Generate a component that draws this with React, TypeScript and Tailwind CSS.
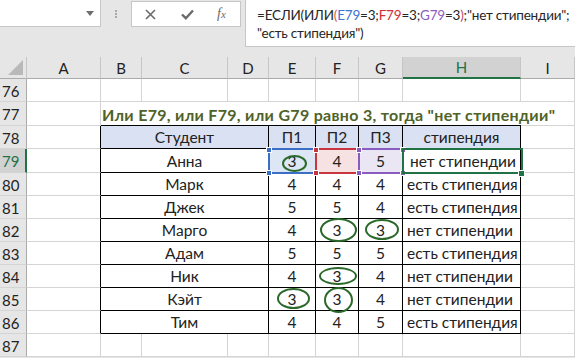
import React from "react";

type Row = { n: number; name: string; p: [number, number, number]; s: string };

const data: Row[] = [
  { n: 79, name: "Анна", p: [3, 4, 5], s: "нет стипендии" },
  { n: 80, name: "Марк", p: [4, 4, 4], s: "есть стипендия" },
  { n: 81, name: "Джек", p: [5, 5, 4], s: "есть стипендия" },
  { n: 82, name: "Марго", p: [4, 3, 3], s: "нет стипендии" },
  { n: 83, name: "Адам", p: [5, 5, 5], s: "есть стипендия" },
  { n: 84, name: "Ник", p: [4, 3, 4], s: "нет стипендии" },
  { n: 85, name: "Кэйт", p: [3, 3, 4], s: "нет стипендии" },
  { n: 86, name: "Тим", p: [4, 4, 5], s: "есть стипендия" },
];

const FONT = "font-['Lato','Liberation_Sans',sans-serif]";

function RowHead({ n, sel }: { n: number; sel?: boolean }) {
  return (
    <div
      className={
        sel
          ? "flex items-center pl-[2px] pt-[2px] text-[15px] bg-[#d2d2d2] text-[#217346] border-r-2 border-r-[#217346] border-b border-b-[#d4d4d4]"
          : "flex items-center pl-[2px] pt-[2px] text-[15px] bg-[#e6e6e6] text-[#222] border-r border-r-[#ababab] border-b border-b-[#d4d4d4]"
      }
    >
      {n}
    </div>
  );
}

function Gray() {
  return <div className="bg-white border-r border-b border-r-[#d4d4d4] border-b-[#d4d4d4]" />;
}

function Ellipse({ l, t, w, h }: { l: number; t: number; w: number; h: number }) {
  return (
    <div
      className="absolute rounded-[50%] border-2 border-[#2b6a2b] pointer-events-none"
      style={{ left: l, top: t, width: w, height: h }}
    />
  );
}

function RefBox({ l, w, color }: { l: number; w: number; color: string }) {
  const t = 148;
  const h = 26;
  const sq = [
    [l - 2, t - 1],
    [l + w - 4, t - 1],
    [l - 2, t + h - 4],
    [l + w - 4, t + h - 4],
  ];
  return (
    <>
      <div
        className="absolute border-2 pointer-events-none"
        style={{ left: l, top: t, width: w, height: h, borderColor: color }}
      />
      {sq.map(([x, y], i) => (
        <div
          key={i}
          className="absolute w-[6px] h-[6px] border border-white"
          style={{ left: x, top: y, background: color }}
        />
      ))}
    </>
  );
}

const CELL = "flex items-center justify-center pt-[2px] text-[15.5px]";

export default function App() {
  const colLetters = ["A", "B", "C", "D", "E", "F", "G", "H", "I"];
  return (
    <div className={`relative w-[575px] h-[358px] overflow-hidden bg-[#e6e6e6] text-[#222] ${FONT}`}>
      {/* formula bar */}
      <div className="flex h-[57px] items-start">
        <div className="relative shrink-0 w-[101px] h-[27px] bg-white border-r border-b border-[#c6c6c6]">
          <svg className="absolute left-[86px] top-[11px]" width="8" height="5" viewBox="0 0 8 5">
            <path d="M0 0 L8 0 L4 5 Z" fill="#6e6e6e" />
          </svg>
        </div>
        <div className="shrink-0 w-[30px] h-[27px] flex flex-col items-center justify-center gap-[1px]">
          <div className="w-[2px] h-[2px] bg-[#a8a8a8]" />
          <div className="w-[2px] h-[2px] bg-[#a8a8a8]" />
          <div className="w-[2px] h-[2px] bg-[#a8a8a8]" />
        </div>
        <div className="shrink-0 mt-[1px] w-[110px] h-[26px] bg-white border border-[#c6c6c6] flex items-center">
          <svg className="ml-[13px]" width="11" height="11" viewBox="0 0 11 11">
            <path d="M1 1 L10 10 M10 1 L1 10" stroke="#6a6a6a" strokeWidth="1.6" />
          </svg>
          <svg className="ml-[25px]" width="13" height="11" viewBox="0 0 13 11">
            <path d="M1 5.5 L4.8 9.2 L12 1.5" stroke="#6a6a6a" strokeWidth="2.4" fill="none" />
          </svg>
          <span className="ml-[23px] font-['Liberation_Serif',serif] italic text-[14px] text-[#6a6a6a] leading-none">
            f<span className="text-[11px]">x</span>
          </span>
        </div>
        <div className="ml-[4px] min-w-0 flex-1 h-[47px] bg-white border-l border-b border-[#c6c6c6] pl-[11px] pt-[6px] text-[13.5px] tracking-[-0.2px] leading-[18px] text-[#262626] whitespace-nowrap overflow-hidden">
          <div>
            =ЕСЛИ(ИЛИ<span className="text-[#d0603a]">(</span>
            <span className="text-[#3c74cf]">E79</span>=3;
            <span className="text-[#d02c3a]">F79</span>=3;
            <span className="text-[#8a5cc0]">G79</span>=3
            <span className="text-[#c04a6a]">)</span>;"нет стипендии";
          </div>
          <div>"есть стипендия")</div>
        </div>
      </div>

      {/* sheet */}
      <div className="grid grid-cols-[27px_74px_41px_86px_41px_47px_43px_44px_118px_54px] grid-rows-[22px_23px_24px_23px_24px_23px_23px_23px_23px_23px_23px_23px_23px]">
        {/* header row */}
        <div className="relative bg-[#e6e6e6] border-r border-b border-r-[#c6c6c6] border-b-[#ababab]">
          <svg className="absolute right-[3px] bottom-[3px]" width="15" height="15" viewBox="0 0 15 15">
            <path d="M15 0 L15 15 L0 15 Z" fill="#b9b9b9" />
          </svg>
        </div>
        {colLetters.map((c) =>
          c === "H" ? (
            <div
              key={c}
              className="flex items-center justify-center pt-[1px] text-[15px] bg-[#d2d2d2] text-[#217346] border-r border-r-[#c6c6c6] border-b-2 border-b-[#217346]"
            >
              {c}
            </div>
          ) : (
            <div
              key={c}
              className="flex items-center justify-center pt-[1px] text-[15px] bg-[#e6e6e6] text-[#222] border-r border-r-[#c6c6c6] border-b border-b-[#ababab]"
            >
              {c}
            </div>
          )
        )}

        {/* row 76 */}
        <RowHead n={76} />
        {colLetters.map((c) => (
          <Gray key={c} />
        ))}

        {/* row 77 */}
        <RowHead n={77} />
        <div className="bg-white border-r border-b border-r-[#d4d4d4] border-b-[#d4d4d4]" />
        <div className="relative z-10 bg-white border-b border-b-black flex items-center pt-[2px] pl-[1px] whitespace-nowrap font-bold text-[16px] tracking-[0.3px] text-[#4f6228]">
          Или E79, или F79, или G79 равно 3, тогда "нет стипендии"
        </div>
        <div className="bg-white border-b border-b-black" />
        <div className="bg-white border-b border-b-black" />
        <div className="bg-white border-b border-b-black" />
        <div className="bg-white border-b border-b-black" />
        <div className="bg-white border-b border-b-black" />
        <div className="bg-white border-b border-b-black" />
        <div className="bg-white border-r border-b border-r-[#d4d4d4] border-b-[#d4d4d4]" />

        {/* row 78 header */}
        <RowHead n={78} />
        <div className="bg-white border-r border-b border-r-black border-b-[#d4d4d4]" />
        <div className={`col-span-3 ${CELL} bg-[#d9e1f2] border-r border-b border-black`}>Студент</div>
        <div className={`${CELL} bg-[#d9e1f2] border-r border-b border-black`}>П1</div>
        <div className={`${CELL} bg-[#d9e1f2] border-r border-b border-black`}>П2</div>
        <div className={`${CELL} bg-[#d9e1f2] border-r border-b border-black`}>П3</div>
        <div className={`${CELL} bg-[#d9e1f2] border-r border-b border-black`}>стипендия</div>
        <Gray />

        {data.map((r) => (
          <React.Fragment key={r.n}>
            <RowHead n={r.n} sel={r.n === 79} />
            <div className="bg-white border-r border-b border-r-black border-b-[#d4d4d4]" />
            <div className={`col-span-3 ${CELL} bg-white border-r border-b border-black`}>{r.name}</div>
            {r.p.map((v, j) => (
              <div
                key={j}
                className={
                  r.n === 79
                    ? j === 0
                      ? `${CELL} bg-[#dce6f4] border-r border-b border-black`
                      : j === 1
                      ? `${CELL} bg-[#f6e2e3] border-r border-b border-black`
                      : `${CELL} bg-[#ebe6f4] border-r border-b border-black`
                    : `${CELL} bg-white border-r border-b border-black`
                }
              >
                {v}
              </div>
            ))}
            <div className="flex items-center pl-[4px] pt-[2px] text-[15.5px] bg-white border-r border-b border-black whitespace-nowrap overflow-hidden">
              {r.n === 79 ? <span className="pl-[3px]">{r.s}</span> : r.s}
            </div>
            <Gray />
          </React.Fragment>
        ))}

        {/* row 87 */}
        <RowHead n={87} />
        {colLetters.map((c) => (
          <Gray key={c} />
        ))}
      </div>

      {/* reference highlights */}
      <RefBox l={268} w={49} color="#3b6fc6" />
      <RefBox l={315} w={45} color="#c8353f" />
      <RefBox l={358} w={46} color="#8a5cc0" />

      {/* active cell H79 */}
      <div className="absolute left-[402px] top-[148px] w-[121px] h-[26px] border-2 border-[#217346] pointer-events-none" />
      <div className="absolute left-[518px] top-[170px] w-[7px] h-[7px] bg-[#217346] border border-white" />

      {/* circles */}
      <Ellipse l={282} t={155} w={25} h={17} />
      <Ellipse l={320} t={218} w={37} h={24} />
      <Ellipse l={365} t={219} w={34} h={21} />
      <Ellipse l={319} t={267} w={38} h={18} />
      <Ellipse l={277} t={288} w={33} h={21} />
      <Ellipse l={324} t={287} w={29} h={26} />
    </div>
  );
}
